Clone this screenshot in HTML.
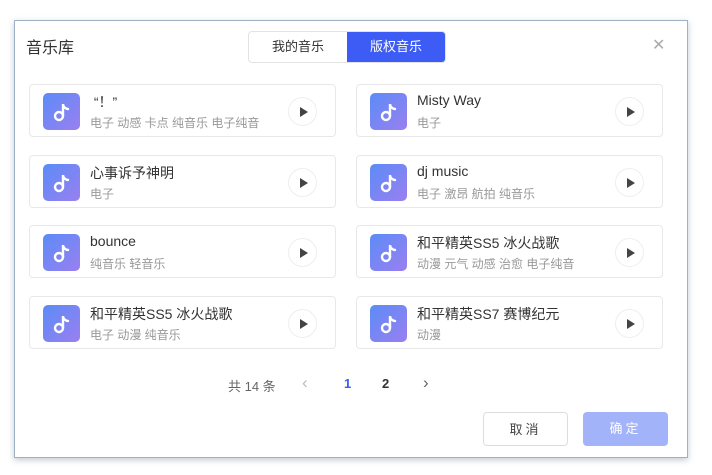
<!DOCTYPE html>
<html><head><meta charset="utf-8"><style>
*{margin:0;padding:0;box-sizing:border-box}
body{width:712px;height:475px;background:#fff;font-family:"Liberation Sans","Noto Sans CJK SC",sans-serif;position:relative;overflow:hidden}
.dlg{position:absolute;left:14px;top:20px;width:674px;height:438px;background:#fff;border:1px solid #9fb0c4;box-shadow:0 2px 6px rgba(80,100,130,.35)}
.t{position:absolute;left:26px;top:34px;font-size:16px;color:#333}
.tabs{position:absolute;left:248px;top:31px;height:32px;display:flex;border:1px solid #e3e3e3;border-radius:4px;overflow:hidden}
.tabs div{width:98px;line-height:30px;text-align:center;font-size:13px;color:#333}
.tabs .on{background:#3d5bf5;color:#fff}
.x{position:absolute;left:652px;top:35px;font-size:16px;color:#aaa}
.card{position:absolute;width:307px;height:53px;border:1px solid #e8e8e8;border-radius:4px}
.ic{position:absolute;left:13px;top:8px;width:37px;height:37px;border-radius:5px;background:linear-gradient(135deg,#5b8cf7,#9a7ff0)}
.nm{position:absolute;left:60px;top:7px;font-size:14px;color:#333;white-space:nowrap}
.sb{position:absolute;left:60px;top:29px;font-size:12px;color:#999;white-space:nowrap}
.pl{position:absolute;right:18px;top:12px;width:29px;height:29px;border-radius:50%;border:1px solid #eee}
.pl:after{content:"";position:absolute;left:11px;top:9px;border-left:8px solid #444;border-top:5px solid transparent;border-bottom:5px solid transparent}
.pg{position:absolute;top:376px;font-size:13px;color:#666}
.btn{position:absolute;top:412px;height:34px;width:85px;border-radius:4px;text-align:center;line-height:34px;font-size:13px;letter-spacing:3px}
</style></head><body>
<div class="dlg"></div>
<div class="t">音乐库</div>
<div class="tabs"><div>我的音乐</div><div class="on">版权音乐</div></div>
<div class="x">✕</div>

<div class="card" style="left:29px;top:84px"><div class="ic"><svg width="37" height="37" viewBox="0 0 37 37"><circle cx="16" cy="23" r="4" fill="none" stroke="#fff" stroke-width="2.4"/><path d="M20 23V11c0 3 3 5 5 5" fill="none" stroke="#fff" stroke-width="2.4" stroke-linecap="round"/></svg></div><div class="nm">&nbsp;“！”</div><div class="sb">电子 动感 卡点 纯音乐 电子纯音</div><div class="pl"></div></div>
<div class="card" style="left:356px;top:84px"><div class="ic"><svg width="37" height="37" viewBox="0 0 37 37"><circle cx="16" cy="23" r="4" fill="none" stroke="#fff" stroke-width="2.4"/><path d="M20 23V11c0 3 3 5 5 5" fill="none" stroke="#fff" stroke-width="2.4" stroke-linecap="round"/></svg></div><div class="nm">Misty Way</div><div class="sb">电子</div><div class="pl"></div></div>
<div class="card" style="left:29px;top:155px"><div class="ic"><svg width="37" height="37" viewBox="0 0 37 37"><circle cx="16" cy="23" r="4" fill="none" stroke="#fff" stroke-width="2.4"/><path d="M20 23V11c0 3 3 5 5 5" fill="none" stroke="#fff" stroke-width="2.4" stroke-linecap="round"/></svg></div><div class="nm">心事诉予神明</div><div class="sb">电子</div><div class="pl"></div></div>
<div class="card" style="left:356px;top:155px"><div class="ic"><svg width="37" height="37" viewBox="0 0 37 37"><circle cx="16" cy="23" r="4" fill="none" stroke="#fff" stroke-width="2.4"/><path d="M20 23V11c0 3 3 5 5 5" fill="none" stroke="#fff" stroke-width="2.4" stroke-linecap="round"/></svg></div><div class="nm">dj music</div><div class="sb">电子 激昂 航拍 纯音乐</div><div class="pl"></div></div>
<div class="card" style="left:29px;top:225px"><div class="ic"><svg width="37" height="37" viewBox="0 0 37 37"><circle cx="16" cy="23" r="4" fill="none" stroke="#fff" stroke-width="2.4"/><path d="M20 23V11c0 3 3 5 5 5" fill="none" stroke="#fff" stroke-width="2.4" stroke-linecap="round"/></svg></div><div class="nm">bounce</div><div class="sb">纯音乐 轻音乐</div><div class="pl"></div></div>
<div class="card" style="left:356px;top:225px"><div class="ic"><svg width="37" height="37" viewBox="0 0 37 37"><circle cx="16" cy="23" r="4" fill="none" stroke="#fff" stroke-width="2.4"/><path d="M20 23V11c0 3 3 5 5 5" fill="none" stroke="#fff" stroke-width="2.4" stroke-linecap="round"/></svg></div><div class="nm">和平精英SS5 冰火战歌</div><div class="sb">动漫 元气 动感 治愈 电子纯音</div><div class="pl"></div></div>
<div class="card" style="left:29px;top:296px"><div class="ic"><svg width="37" height="37" viewBox="0 0 37 37"><circle cx="16" cy="23" r="4" fill="none" stroke="#fff" stroke-width="2.4"/><path d="M20 23V11c0 3 3 5 5 5" fill="none" stroke="#fff" stroke-width="2.4" stroke-linecap="round"/></svg></div><div class="nm">和平精英SS5 冰火战歌</div><div class="sb">电子 动漫 纯音乐</div><div class="pl"></div></div>
<div class="card" style="left:356px;top:296px"><div class="ic"><svg width="37" height="37" viewBox="0 0 37 37"><circle cx="16" cy="23" r="4" fill="none" stroke="#fff" stroke-width="2.4"/><path d="M20 23V11c0 3 3 5 5 5" fill="none" stroke="#fff" stroke-width="2.4" stroke-linecap="round"/></svg></div><div class="nm">和平精英SS7 赛博纪元</div><div class="sb">动漫</div><div class="pl"></div></div>

<div class="pg" style="left:228px">共 14 条</div>
<div class="pg" style="left:302px;top:373px;font-size:17px;color:#bbb">‹</div>
<div class="pg" style="left:344px;color:#3d5bf5;font-weight:bold">1</div>
<div class="pg" style="left:382px;color:#333;font-weight:bold">2</div>
<div class="pg" style="left:423px;top:373px;font-size:17px;color:#666">›</div>
<div class="btn" style="left:483px;border:1px solid #ddd;color:#444">取消</div>
<div class="btn" style="left:583px;background:#a3b3fa;color:#fff">确定</div>
</body></html>
